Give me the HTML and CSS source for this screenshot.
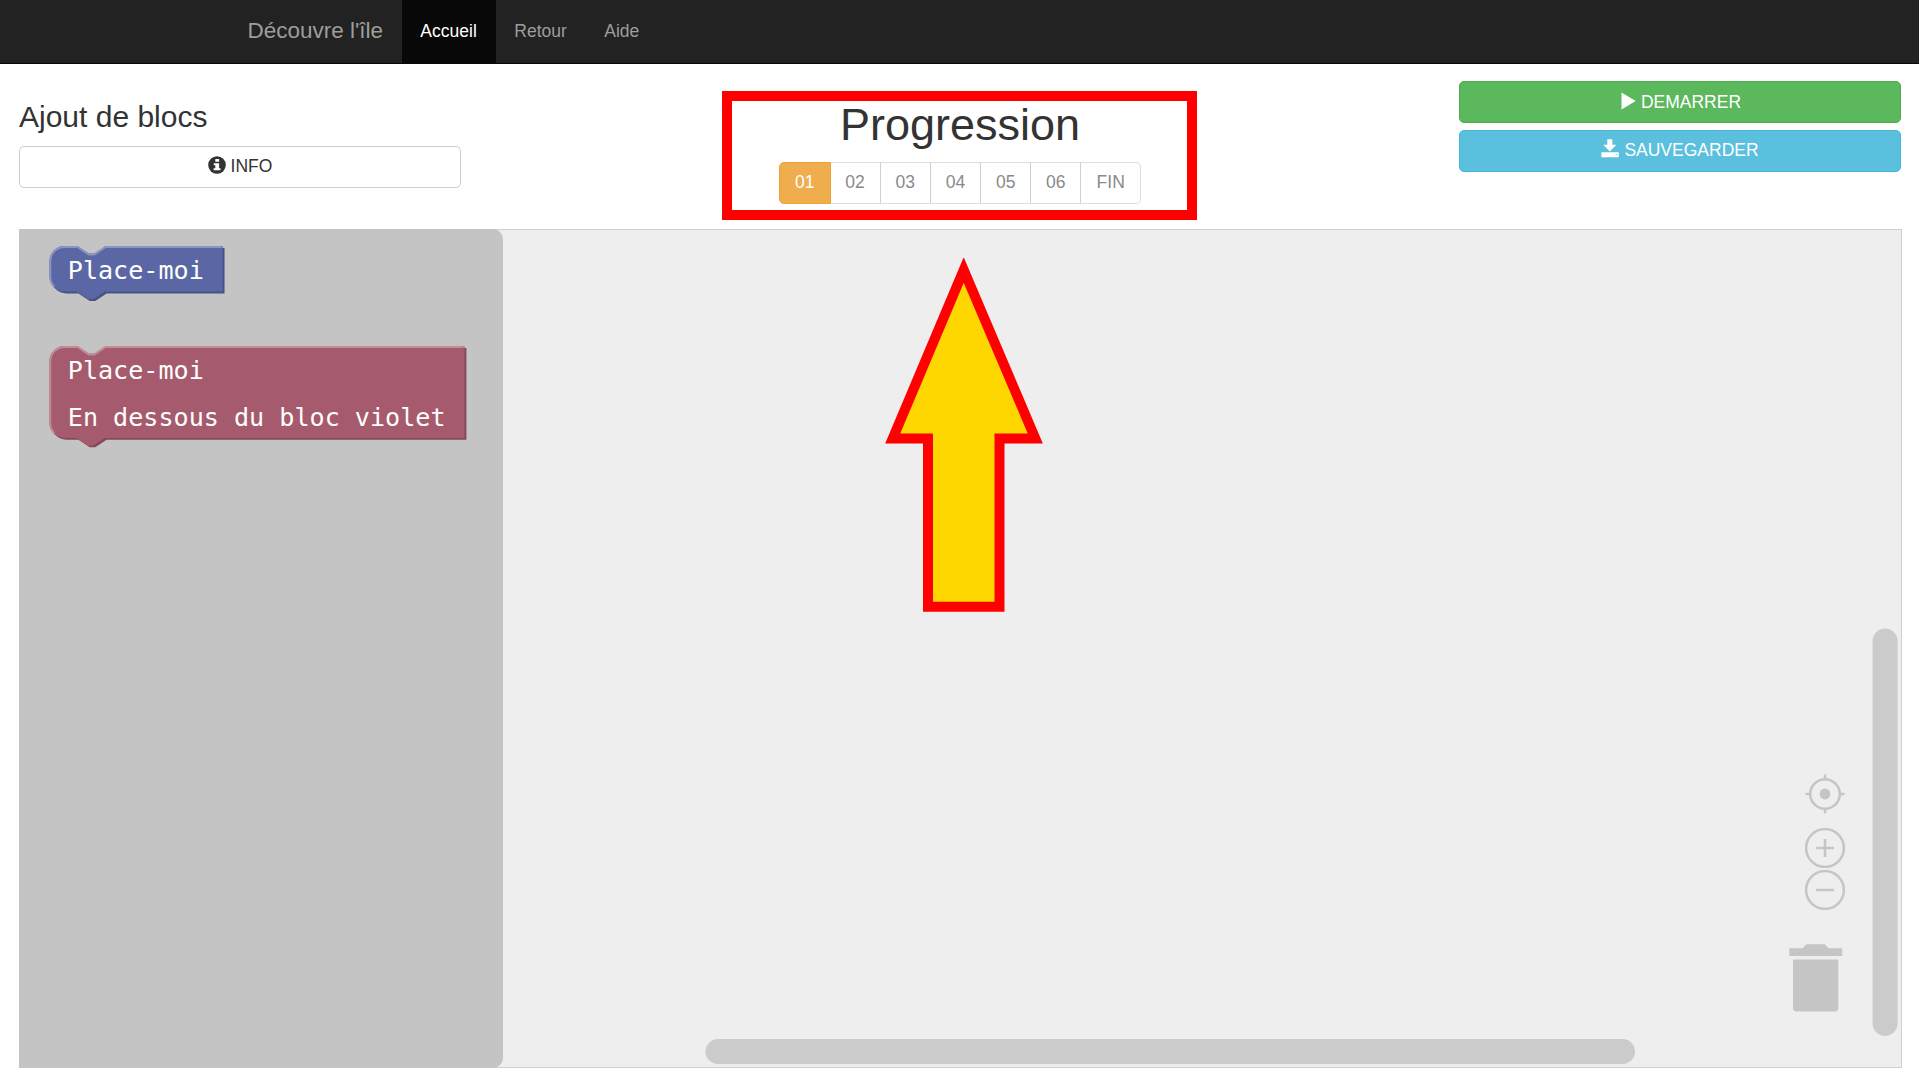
FILE: index.html
```html
<!DOCTYPE html>
<html lang="fr">
<head>
<meta charset="utf-8">
<title>Découvre l'île</title>
<link rel="stylesheet" href="styles.css">
</head>
<body>
<nav class="navbar">
  <a class="brand">Découvre l'île</a>
  <a class="nav-link active">Accueil</a>
  <a class="nav-link">Retour</a>
  <a class="nav-link">Aide</a>
</nav>
<header class="toolbar">
  <div class="column column-left">
    <h3 class="title">Ajout de blocs</h3>
    <button class="btn btn-default"><svg class="glyph glyph-info" viewBox="0 0 18 18"><circle cx="9" cy="9" r="8.8" fill="#333"/><path d="M7.3 3h3.8v2.8H7.3zM5.8 7.3h5.3v5h1.4v2H5.6v-2h1.7v-3H5.8z" fill="#fff"/></svg><span>INFO</span></button>
  </div>
  <section class="progress">
    <h1 class="progress-title">Progression</h1>
    <div class="steps">
      <span class="step current">01</span><span class="step">02</span><span class="step">03</span><span class="step">04</span><span class="step">05</span><span class="step">06</span><span class="step last">FIN</span>
    </div>
  </section>
  <div class="column column-right">
    <button class="btn btn-success"><svg class="glyph glyph-play" viewBox="0 0 15 18"><path d="M.5.6 14.7 9 .5 17.4z" fill="#fff"/></svg><span>DEMARRER</span></button>
    <button class="btn btn-primary"><svg class="glyph glyph-save" viewBox="0 0 18 19"><path d="M6.3.3h5v5.4h4L8.8 12.4 2.3 5.7h4zM.4 13.3h17.4v5H.4z" fill="#fff"/><path d="M14.6 15.2h1.3v1h-1.3z" fill="#5bc0de"/></svg><span>SAUVEGARDER</span></button>
  </div>
</header>
<main class="workspace">
  <aside class="flyout">
    <svg class="block block-small" viewBox="0 0 180 60">
      <g transform="translate(0.4 0) scale(1.875)">
        <path transform="translate(1 1)" fill="#495284" d="M0 8A8 8 0 0 1 8 0H15l6 4h3l6-4H92.4V24.3H29.5l-6 4h-3l-6-4H8a8 8 0 0 1-8-8z"/>
        <path fill="#5b67a5" d="M0 8A8 8 0 0 1 8 0H15l6 4h3l6-4H92.4V24.3H29.5l-6 4h-3l-6-4H8a8 8 0 0 1-8-8z"/>
        <path fill="none" stroke="#8c95c0" d="M2.7 21.7A7.5 7.5 0 0 1 .5 16.4V8A7.5 7.5 0 0 1 8 .5H15l6 4h3l6-4H91.9"/>
      </g>
      <text class="block-text" x="18.8" y="33">Place-moi</text>
    </svg>
    <svg class="block block-large" viewBox="0 0 422 106">
      <g transform="translate(0.4 0) scale(1.875)">
        <path transform="translate(1 1)" fill="#844957" d="M0 8A8 8 0 0 1 8 0H15l6 4h3l6-4H221.4V49H29.5l-6 4h-3l-6-4H8a8 8 0 0 1-8-8z"/>
        <path fill="#a55b6d" d="M0 8A8 8 0 0 1 8 0H15l6 4h3l6-4H221.4V49H29.5l-6 4h-3l-6-4H8a8 8 0 0 1-8-8z"/>
        <path fill="none" stroke="#c08c99" d="M2.7 46.5A7.5 7.5 0 0 1 .5 41.2V8A7.5 7.5 0 0 1 8 .5H15l6 4h3l6-4H220.9"/>
      </g>
      <text class="block-text" x="18.8" y="33">Place-moi</text>
      <text class="block-text" x="18.8" y="80">En dessous du bloc violet</text>
    </svg>
  </aside>
  <svg class="arrow" viewBox="0 0 158 354"><path d="M78.7 12 150.3 180.5H114.5V348.8H43V180.5H7.7z" fill="#ffd700" stroke="#f00" stroke-width="10" stroke-miterlimit="10"/></svg>
  <div class="controls">
    <svg class="control target" viewBox="0 0 40 40"><g fill="none" stroke="#c5c5c5" stroke-width="2.5"><circle cx="20" cy="20" r="14.8"/><path d="M20 .5v5M20 34.5v5M.5 20h5M34.5 20h5"/></g><circle cx="20" cy="20" r="5.4" fill="#c5c5c5"/></svg>
    <svg class="control plus" viewBox="0 0 40 40"><g fill="none" stroke="#c5c5c5" stroke-width="2.5"><circle cx="20" cy="20" r="18.9"/><path d="M11 20h18M20 11v18"/></g></svg>
    <svg class="control minus" viewBox="0 0 40 40"><g fill="none" stroke="#c5c5c5" stroke-width="2.5"><circle cx="20" cy="20" r="18.9"/><path d="M11 20h18"/></g></svg>
  </div>
  <svg class="trash" viewBox="0 0 54 68"><path fill="#c5c5c5" d="M.3 4.3H13.6L17.3.3H35.9L39.6 4.3H53.3V12H.3zM4 15.6H49.3V64Q49.3 67.6 45.7 67.6H7.6Q4 67.6 4 64z"/></svg>
  <svg class="scroll scroll-v" viewBox="0 0 27 409"><rect x=".6" y=".5" width="25" height="407.4" rx="12.5"/></svg>
  <svg class="scroll scroll-h" viewBox="0 0 931 26"><rect x=".5" y="0" width="929.5" height="25" rx="12.5"/></svg>
</main>
</body>
</html>
```

FILE: styles.css
```css
* { box-sizing: border-box; }
body {
  margin: 0;
  width: 1919px;
  height: 1079px;
  overflow: hidden;
  background: #fff;
  color: #333;
  font: 17.5px/25px "Liberation Sans", Arial, sans-serif;
}
.navbar {
  display: flex;
  height: 64px;
  padding-left: 229px;
  background: #222;
  border-bottom: 1px solid #080808;
}
.brand, .nav-link {
  padding: 0 18.75px;
  line-height: 62px;
  color: #9d9d9d;
  white-space: nowrap;
}
.brand { font-size: 22.5px; padding: 0 18.5px; }
.nav-link.active { background: #080808; color: #fff; }
.toolbar {
  display: flex;
  justify-content: space-between;
  height: 165px;
  padding: 0 18px 0 19px;
}
.column { display: flex; flex-direction: column; width: 442px; }
.column-left { padding-top: 36px; }
.column-right { padding-top: 17px; gap: 7px; }
.title {
  margin: 0 0 13px;
  font-size: 30px;
  font-weight: 500;
  line-height: 33px;
}
.btn {
  display: flex;
  align-items: center;
  justify-content: center;
  gap: 5px;
  height: 42px;
  padding: 0 0 2px;
  border: 1px solid #ccc;
  border-radius: 5px;
  background: #fff;
  color: #333;
  font: inherit;
}
.btn-success { padding: 0 0 0 2px; background: #5cb85c; border-color: #4cae4c; color: #fff; }
.btn-primary { background: #5bc0de; border-color: #46b8da; color: #fff; }
.glyph { display: block; height: 18px; margin-bottom: 2px; }
.glyph-info { width: 18px; margin-bottom: 3px; }
.glyph-play { width: 15px; }
.glyph-save { width: 18px; height: 19px; margin-bottom: 3px; }
.progress {
  width: 475px;
  height: 129px;
  margin: 27px 1px 0 0;
  border: 10px solid #f00;
  display: flex;
  flex-direction: column;
  align-items: center;
  padding-left: 1px;
}
.progress-title {
  margin: -1px 0 12px;
  font-size: 45px;
  font-weight: 500;
  line-height: 50px;
}
.steps { display: flex; width: 362px; height: 42px; }
.step {
  flex: 0 0 50.2px;
  border: 1px solid #ddd;
  border-right-color: #d0d0d0;
  border-left-width: 0;
  color: #8a8a8a;
  line-height: 38px;
  text-align: center;
}
.step.current {
  flex-basis: 51.5px;
  border-color: #eea236;
  border-left-width: 1px;
  border-radius: 5px 0 0 5px;
  background: #f0ad4e;
  color: #fff;
}
.step.last { flex: 1; border-color: #ddd; border-radius: 0 5px 5px 0; }
.workspace {
  position: relative;
  width: 1883px;
  height: 839px;
  margin-left: 19px;
  border: 1px solid #d0d0d0;
  background: #eee;
}
.flyout {
  display: flex;
  flex-direction: column;
  align-items: flex-start;
  gap: 40px;
  width: 484px;
  height: 839px;
  margin: -1px 0 0 -1px;
  padding: 17px 0 0 30px;
  border-radius: 0 10px 10px 0;
  background: #c4c4c4;
}
.block { display: block; flex: none; }
.block-small { width: 180px; height: 60px; }
.block-large { width: 422px; height: 106px; }
.block-text {
  fill: #fff;
  font-family: "DejaVu Sans Mono", monospace;
  font-size: 25.1px;
}
.arrow { position: absolute; left: 865px; top: 28px; width: 158px; height: 354px; }
.controls { position: absolute; left: 1785px; top: 544px; width: 40px; }
.control { display: block; width: 40px; height: 40px; }
.plus { margin-top: 14px; }
.minus { margin-top: 2px; }
.trash { position: absolute; left: 1769px; top: 714px; width: 54px; height: 68px; }
.scroll { position: absolute; fill: #cbcbcb; }
.scroll-v { left: 1852px; top: 398px; width: 27px; height: 409px; }
.scroll-h { left: 685px; top: 809px; width: 931px; height: 26px; }
```
